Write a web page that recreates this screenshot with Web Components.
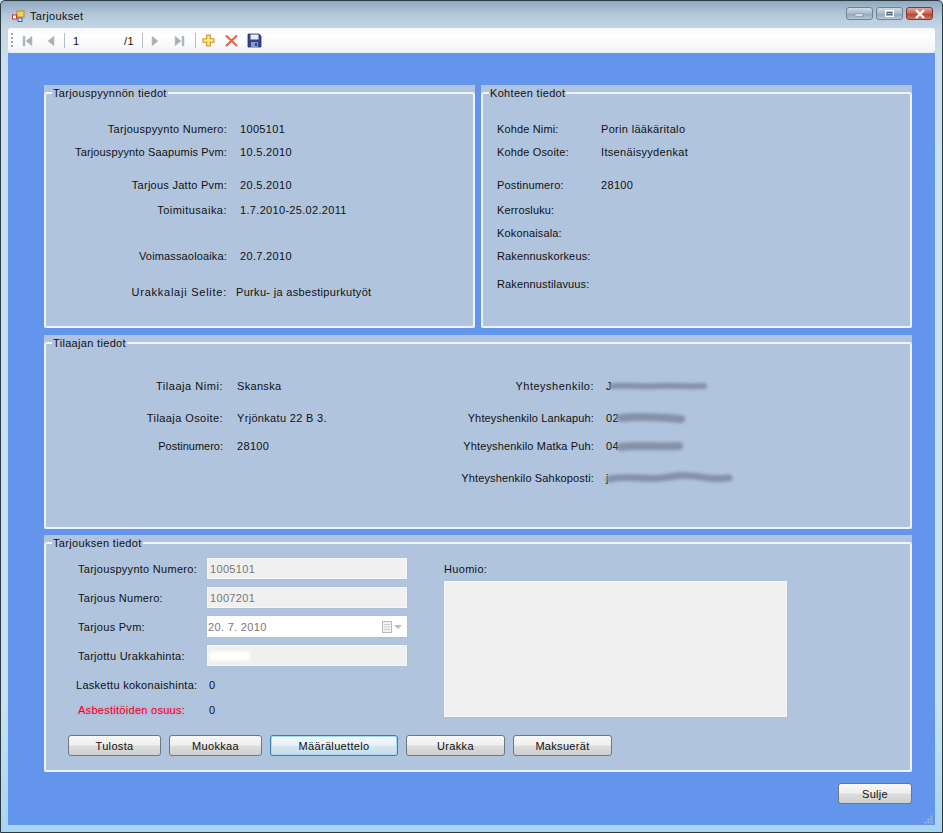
<!DOCTYPE html>
<html>
<head>
<meta charset="utf-8">
<title>Tarjoukset</title>
<style>
  html, body { margin: 0; padding: 0; background: #c9dcea; }
  body { font: 11px/16px "Liberation Sans", Arial, sans-serif; letter-spacing: .32px; color: #111; }
</style>
</head>
<body>

<win-frame>
  <form-panel>
    <group-box style="--w:431px;--h:243px;--pad:18px 0 0 0;--label-w:181px;--val-gap:13px">
      <span slot="title">Tarjouspyynnön tiedot</span>
      <form-row style="--label-ls:.29px"><span slot="label">Tarjouspyynto Numero:</span>1005101</form-row>
      <form-row style="margin-top:3px"><span slot="label">Tarjouspyynto Saapumis Pvm:</span>10.5.2010</form-row>
      <form-row style="margin-top:13px;--label-ls:.26px"><span slot="label">Tarjous Jatto Pvm:</span>20.5.2010</form-row>
      <form-row style="margin-top:5px;--label-ls:.48px"><span slot="label">Toimitusaika:</span>1.7.2010-25.02.2011</form-row>
      <form-row style="margin-top:26px"><span slot="label">Voimassaoloaika:</span>20.7.2010</form-row>
      <form-row style="margin-top:16px;--val-gap:9px;--label-ls:.75px"><span slot="label">Urakkalaji Selite:</span>Purku- ja asbestipurkutyöt</form-row>
    </group-box>

    <group-box style="--w:431px;--h:243px;--pad:18px 0 0 14px;--label-w:104px;--val-gap:0px">
      <span slot="title">Kohteen tiedot</span>
      <form-row left><span slot="label">Kohde Nimi:</span>Porin lääkäritalo</form-row>
      <form-row left style="margin-top:3px"><span slot="label">Kohde Osoite:</span>Itsenäisyydenkat</form-row>
      <form-row left style="margin-top:13px"><span slot="label">Postinumero:</span>28100</form-row>
      <form-row left style="margin-top:5px"><span slot="label">Kerrosluku:</span></form-row>
      <form-row left style="margin-top:3px"><span slot="label">Kokonaisala:</span></form-row>
      <form-row left style="margin-top:3px"><span slot="label">Rakennuskorkeus:</span></form-row>
      <form-row left style="margin-top:8px"><span slot="label">Rakennustilavuus:</span></form-row>
    </group-box>

    <group-box wide style="--h:194px;--pad:25px 0 0 0">
      <span slot="title">Tilaajan tiedot</span>
      <split-cols>
        <div slot="first" style="--label-w:177px;--val-gap:14px">
          <form-row style="--label-ls:.53px"><span slot="label">Tilaaja Nimi:</span>Skanska</form-row>
          <form-row style="margin-top:12px;--label-ls:.42px"><span slot="label">Tilaaja Osoite:</span>Yrjönkatu 22 B 3.</form-row>
          <form-row style="margin-top:8px;--label-ls:0px"><span slot="label">Postinumero:</span>28100</form-row>
        </div>
        <div slot="second" style="--label-w:148px;--val-gap:12px">
          <form-row style="--label-ls:.5px"><span slot="label">Yhteyshenkilo:</span>J<blur-smudge w="92" d="M1 8 C20 7 30 9 45 8 S75 9 92 8" sw="6"></blur-smudge></form-row>
          <form-row style="margin-top:12px"><span slot="label">Yhteyshenkilo Lankapuh:</span>02<blur-smudge w="65" d="M2 8 C20 6 40 7 62 9" sw="8"></blur-smudge></form-row>
          <form-row style="margin-top:8px"><span slot="label">Yhteyshenkilo Matka Puh:</span>04<blur-smudge w="63" d="M2 9 C20 7 40 9 60 8" sw="8"></blur-smudge></form-row>
          <form-row style="margin-top:12px"><span slot="label">Yhteyshenkilo Sahkoposti:</span>j<blur-smudge w="122" d="M1 9 C20 5 35 10 52 8 S72 4 92 7 S112 8 120 8" sw="7"></blur-smudge></form-row>
        </div>
      </split-cols>
    </group-box>

    <group-box wide style="--h:237px;--pad:7px 0 0 22px;--label-ls:.28px">
      <span slot="title">Tarjouksen tiedot</span>
      <offer-form>
        <form-row left slot="fields" style="--label-w:129px;--val-gap:0px;margin-left:10px;--row-h:21px"><span slot="label">Tarjouspyynto Numero:</span><text-box disabled>1005101</text-box></form-row>
        <form-row left slot="fields" style="--label-w:129px;--val-gap:0px;margin:8px 0 0 10px;--row-h:21px"><span slot="label">Tarjous Numero:</span><text-box disabled>1007201</text-box></form-row>
        <form-row left slot="fields" style="--label-w:129px;--val-gap:0px;margin:8px 0 0 10px;--row-h:21px"><span slot="label">Tarjous Pvm:</span><date-box>20. 7. 2010</date-box></form-row>
        <form-row left slot="fields" style="--label-w:129px;--val-gap:0px;margin:8px 0 0 10px;--row-h:21px"><span slot="label">Tarjottu Urakkahinta:</span><text-box disabled><blur-smudge w="40" h="14" d="M3 7 L36 7" sw="9" c="#ffffff"></blur-smudge></text-box></form-row>
        <form-row left slot="fields" style="--label-w:133px;--val-gap:0px;margin:9px 0 0 8px"><span slot="label">Laskettu kokonaishinta:</span>0</form-row>
        <form-row left slot="fields" style="--label-w:131px;--val-gap:0px;margin:5px 0 0 10px"><span slot="label" class="warn" style="color:#e4002b;text-shadow:0 0 3px rgba(255,110,130,.55)">Asbestitöiden osuus:</span>0</form-row>

        <span slot="note">Huomio:</span>

        <win-button slot="actions" style="--bw:93px">Tulosta</win-button>
        <win-button slot="actions" style="--bw:93px">Muokkaa</win-button>
        <win-button slot="actions" focused style="--bw:128px">Määräluettelo</win-button>
        <win-button slot="actions" style="--bw:99px">Urakka</win-button>
        <win-button slot="actions" style="--bw:99px">Maksuerät</win-button>
      </offer-form>
    </group-box>
  </form-panel>
</win-frame>

<script>
class WinFrame extends HTMLElement {
  constructor() {
    super();
    this.attachShadow({mode: 'open'}).innerHTML = `
    <style>
      :host { display: block; width: 943px; height: 833px; box-sizing: border-box; position: relative;
        border: 1px solid #2b3b42; border-radius: 5px 5px 0 0; overflow: hidden;
        background: linear-gradient(#8fa8bf 0, #b4c8da 14px, #c6d7e5 28px, #c9dff0 60px, #c8e2f3 700px, #a9d5f1 826px); }
      .title { display: flex; align-items: center; height: 27px; padding: 3px 0 0 11px; box-sizing: border-box; }
      .title span { margin-left: 5px; }
      .caption { margin-left: auto; margin-right: 9px; display: flex; gap: 3px; margin-top: -5px; }
      .cap { width: 27px; height: 13px; box-sizing: border-box; border: 1px solid #6f8296; border-radius: 3px;
        background: linear-gradient(#cfdbe6, #a6bacd 50%, #8ea5bb 52%, #b7c8d8);
        display: flex; align-items: center; justify-content: center; }
      .cap.close { border-color: #7a3a33; background: linear-gradient(#e0a59b, #c8604f 50%, #b53b2a 52%, #d07866); }
      .client { margin: 0 7px; height: 772px; background: #6495ed; display: flex; flex-direction: column; box-sizing: border-box; padding: 32px 23px 0 36px; }
      .foot { display: flex; justify-content: flex-end; margin-top: 11px; }
      .grip { position: absolute; right: 9px; bottom: 8px; width: 9px; height: 9px; }
    </style>
    <div class="title">
      <svg width="13" height="13" viewBox="0 0 13 13">
        <rect x="5" y="1" width="7" height="6" fill="#f4d35a" stroke="#b58a1e"/>
        <rect x=".5" y="5" width="4" height="4" fill="#fff" stroke="#c0392b"/>
        <rect x="6" y="8" width="4" height="3.5" fill="#cfe0f5" stroke="#3f63a8"/>
      </svg>
      <span>Tarjoukset</span>
      <div class="caption">
        <div class="cap"><svg width="11" height="6"><rect x="1" y="3" width="8" height="2" fill="#fff" stroke="#5d6f82" stroke-width=".5"/></svg></div>
        <div class="cap"><svg width="11" height="9"><rect x="1.5" y="1.5" width="8" height="6" fill="none" stroke="#fff" stroke-width="1"/><rect x="3.5" y="3.5" width="4" height="2" fill="none" stroke="#5d6f82" stroke-width="1"/></svg></div>
        <div class="cap close"><svg width="12" height="10"><path d="M2 1 L10 9 M10 1 L2 9" stroke="#fff" stroke-width="2.4"/></svg></div>
      </div>
    </div>
    <nav-strip></nav-strip>
    <div class="client">
      <slot></slot>
      <div class="foot"><win-button style="--bw:74px">Sulje</win-button></div>
    </div>
    <svg class="grip" viewBox="0 0 9 9" fill="#9fb4cf">
      <rect x="6.5" y=".5" width="2" height="2"/><rect x="3.5" y="3.5" width="2" height="2"/><rect x="6.5" y="3.5" width="2" height="2"/>
      <rect x=".5" y="6.5" width="2" height="2"/><rect x="3.5" y="6.5" width="2" height="2"/><rect x="6.5" y="6.5" width="2" height="2"/>
    </svg>`;
  }
}

class NavStrip extends HTMLElement {
  constructor() {
    super();
    const arrow = d => `<svg width="14" height="14" viewBox="0 0 14 14"><path d="${d}" fill="#a9aeb5" stroke="#c3c7cc" stroke-width=".6"/></svg>`;
    this.attachShadow({mode: 'open'}).innerHTML = `
    <style>
      :host { display: flex; align-items: center; margin: 0 7px; height: 25px; box-sizing: border-box;
        border-radius: 3px 3px 4px 4px; background: linear-gradient(#f8f9fb, #ffffff 30%, #f6f7f8 80%, #eceef1); }
      .grip { width: 2px; height: 16px; margin-left: 3px; background: repeating-linear-gradient(#9aa7b5 0 2px, transparent 2px 4px); }
      .sep { width: 1px; height: 15px; background: #b7bdc4; }
      .num { width: 57px; margin-left: 2px; padding-left: 6px; box-sizing: border-box; }
      svg { display: block; flex: none; }
    </style>
    <div class="grip"></div>
    <span style="margin-left:8px"></span>${arrow('M2 2 H4 V12 H2 Z M11 2 V12 L5 7 Z')}
    <span style="margin-left:9px"></span>${arrow('M10 2 V12 L4 7 Z')}
    <span style="margin-left:6px"></span><div class="sep"></div>
    <div class="num">1</div><span>/1</span>
    <span style="margin-left:8px"></span><div class="sep"></div>
    <span style="margin-left:5px"></span>${arrow('M4 2 V12 L10 7 Z')}
    <span style="margin-left:10px"></span>${arrow('M3 2 V12 L9 7 Z M10 2 H12 V12 H10 Z')}
    <span style="margin-left:9px"></span><div class="sep"></div>
    <span style="margin-left:5px"></span>
    <svg width="15" height="15" viewBox="0 0 15 15"><path d="M5.7 2 H9.3 V5.7 H13 V9.3 H9.3 V13 H5.7 V9.3 H2 V5.7 H5.7 Z" fill="#ffe88c" stroke="#cf9420" stroke-width="1.1"/></svg>
    <span style="margin-left:8px"></span>
    <svg width="15" height="15" viewBox="0 0 15 15"><path d="M2 2.5 L13 13 M13 2.5 L2 13" stroke="#dc6a50" stroke-width="2.2"/></svg>
    <span style="margin-left:8px"></span>
    <svg width="15" height="15" viewBox="0 0 15 15"><path d="M1 1 H12 L14 3 V14 H1 Z" fill="#33448f" stroke="#27346f" stroke-width=".8"/><rect x="3.5" y="1.5" width="8" height="5" fill="#e8ecf5"/><rect x="4" y="9" width="7" height="5" fill="#8b97c8"/><rect x="8" y="10" width="2" height="3" fill="#33448f"/></svg>`;
  }
}

class FormPanel extends HTMLElement {
  constructor() {
    super();
    this.attachShadow({mode: 'open'}).innerHTML = `
    <style>
      :host { display: grid; grid-template-columns: 431px 431px; column-gap: 6px; row-gap: 7px; }
      ::slotted(group-box[wide]) { grid-column: 1 / 3; }
      ::slotted(group-box:last-child) { margin-top: -1px; }
    </style>
    <slot></slot>`;
  }
}

class GroupBox extends HTMLElement {
  constructor() {
    super();
    this.attachShadow({mode: 'open'}).innerHTML = `
    <style>
      :host { display: block; height: var(--h); background: #b0c4de; }
      fieldset { margin: 0; padding: 0; height: 100%; box-sizing: border-box; min-width: 0;
        border: 2px solid #eef3f9; border-radius: 3px; }
      legend { padding: 0 1px; margin-left: 6px; line-height: 16px; }
      .body { padding: var(--pad, 0); }
    </style>
    <fieldset>
      <legend><slot name="title"></slot></legend>
      <div class="body"><slot></slot></div>
    </fieldset>`;
  }
}

class FormRow extends HTMLElement {
  constructor() {
    super();
    this.attachShadow({mode: 'open'}).innerHTML = `
    <style>
      :host { display: flex; align-items: center; height: var(--row-h, 20px); white-space: nowrap; }
      .label { width: var(--label-w, 100px); flex: none; text-align: right; letter-spacing: var(--label-ls, .15px); }
      :host([left]) .label { text-align: left; }
      .val { margin-left: var(--val-gap, 0); display: flex; align-items: center; }
    </style>
    <div class="label"><slot name="label"></slot></div>
    <div class="val"><slot></slot></div>`;
  }
}

class SplitCols extends HTMLElement {
  constructor() {
    super();
    this.attachShadow({mode: 'open'}).innerHTML = `
    <style>:host { display: grid; grid-template-columns: 400px 1fr; }</style>
    <slot name="first"></slot><slot name="second"></slot>`;
  }
}

class OfferForm extends HTMLElement {
  constructor() {
    super();
    this.attachShadow({mode: 'open'}).innerHTML = `
    <style>
      :host { display: block; }
      .top { display: flex; height: 162px; }
      .fields { width: 339px; }
      .note { margin-left: 37px; }
      .note .cap { height: 21px; display: flex; align-items: center; margin-bottom: 2px; }
      .memo { width: 343px; height: 136px; box-sizing: border-box; background: #f0f0f0; border: 1px solid #f9f9f9; box-shadow: 0 0 1px #9eaec4; }
      .actions { display: flex; gap: 8px; margin-top: 15px; }
    </style>
    <div class="top">
      <div class="fields"><slot name="fields"></slot></div>
      <div class="note">
        <div class="cap"><slot name="note"></slot></div>
        <div class="memo"></div>
      </div>
    </div>
    <div class="actions"><slot name="actions"></slot></div>`;
  }
}

class TextBox extends HTMLElement {
  constructor() {
    super();
    this.attachShadow({mode: 'open'}).innerHTML = `
    <style>
      :host { display: flex; align-items: center; width: 200px; height: 21px; box-sizing: border-box; padding-left: 2px;
        background: #f0f0f0; color: #777; border: 1px solid #f7f7f7; box-shadow: 0 0 1px #9eaec4; }
    </style>
    <slot></slot>`;
  }
}

class DateBox extends HTMLElement {
  constructor() {
    super();
    this.attachShadow({mode: 'open'}).innerHTML = `
    <style>
      :host { display: flex; align-items: center; width: 200px; height: 21px; box-sizing: border-box; padding: 0 4px 0 1px;
        background: #fff; color: #777; box-shadow: 0 0 1px #9eaec4; }
      svg { margin-left: auto; }
    </style>
    <slot></slot>
    <svg width="22" height="12" viewBox="0 0 22 12">
      <rect x="1.5" y=".5" width="9" height="11" fill="#f3f3f3" stroke="#bbb"/>
      <path d="M3 3.5 H9 M3 6 H9 M3 8.5 H9" stroke="#cfcfcf"/>
      <path d="M13 4 H21 L17 8 Z" fill="#bdbdbd"/>
    </svg>`;
  }
}

class WinButton extends HTMLElement {
  constructor() {
    super();
    this.attachShadow({mode: 'open'}).innerHTML = `
    <style>
      :host { display: flex; align-items: center; justify-content: center; width: var(--bw); height: 21px; box-sizing: border-box;
        border: 1px solid #6e7780; border-radius: 3px;
        background: linear-gradient(#f8f8f8, #efefef 45%, #dcdcdc 55%, #cfcfcf); }
      :host([focused]) { border-color: #3d7ba6; box-shadow: inset 0 0 0 1px #a9dcf2;
        background: linear-gradient(#f2f9fc, #e8f3f8 45%, #d5e6ee 55%, #c8dce6); }
    </style>
    <slot></slot>`;
  }
}

class BlurSmudge extends HTMLElement {
  constructor() {
    super();
    const w = this.getAttribute('w'), h = this.getAttribute('h') || 16;
    const c = this.getAttribute('c') || '#8492a8';
    this.attachShadow({mode: 'open'}).innerHTML = `
    <style>
      :host { display: inline-flex; }
      svg { filter: blur(1.6px); overflow: visible; }
    </style>
    <svg width="${w}" height="${h}"><path d="${this.getAttribute('d')}" fill="none" stroke="${c}" stroke-width="${this.getAttribute('sw')}" stroke-linecap="round"/></svg>`;
  }
}

customElements.define('nav-strip', NavStrip);
customElements.define('form-panel', FormPanel);
customElements.define('group-box', GroupBox);
customElements.define('form-row', FormRow);
customElements.define('split-cols', SplitCols);
customElements.define('offer-form', OfferForm);
customElements.define('text-box', TextBox);
customElements.define('date-box', DateBox);
customElements.define('win-button', WinButton);
customElements.define('blur-smudge', BlurSmudge);
customElements.define('win-frame', WinFrame);
</script>
</body>
</html>
